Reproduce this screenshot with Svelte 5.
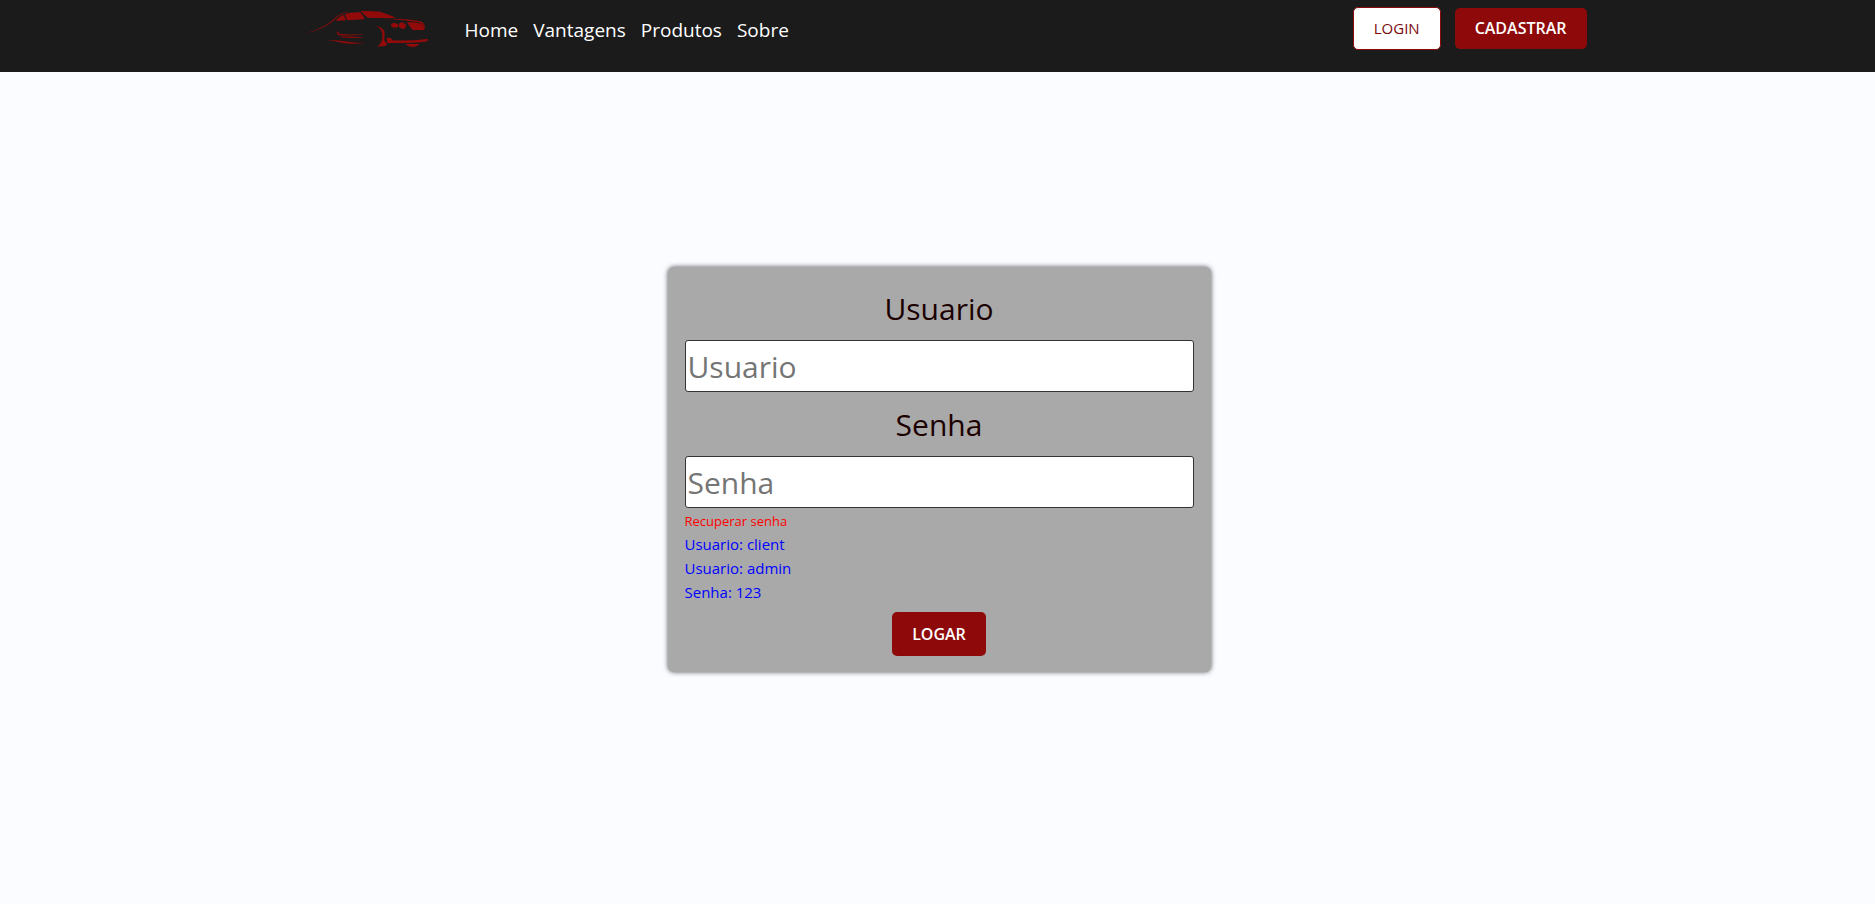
<script>
  const links = ['Home', 'Vantagens', 'Produtos', 'Sobre'];
  const hints = ['Usuario: client', 'Usuario: admin', 'Senha: 123'];
  let user = $state('');
  let password = $state('');
</script>

<header>
  <div class="bar">
    <a class="logo" href="#home" aria-label="Home">
      <svg viewBox="0 0 450 216" aria-hidden="true">
        <path d="M17 100 Q75 82 101 57 Q122 36 150 34 Q123 41 105 59 Q76 87 17 100Z" opacity="0.7" />
        <path d="M108 63 Q117 49 131 45 L138 61Z" />
        <path d="M134 43 Q155 35 181 37 Q190 48 194 58 L142 61Z" />
        <path d="M182 33 Q213 32 240 35 Q268 43 288 54 Q240 55 204 53 Q193 46 182 33Z" />
        <path d="M240 56 Q335 55 365 65 Q377 73 375 88 Q371 72 356 67 Q320 59 240 56Z" />
        <path d="M321 66 Q350 66 366 73 Q374 80 373 90 L338 90 Q329 80 321 66Z" />
        <ellipse cx="284" cy="76" rx="11" ry="7" transform="rotate(10 284 76)" />
        <ellipse cx="307" cy="77" rx="11" ry="9" transform="rotate(30 307 77)" />
        <path d="M228 79 Q259 82 253 112 Q252 128 262 131 L258 137 L231 140 Q248 130 247 108 Q248 86 228 79Z" />
        <path d="M260 113 L273 114 L276 121 Q335 124 383 116 L383 124 Q350 130 300 129 L262 129Z" />
        <path d="M317 132 L358 132 Q351 141 337 141 Q323 140 317 132Z" />
        <path d="M108 92 L119 101 Q155 105 200 103 Q155 109 114 105Z" />
        <path d="M112 110 Q150 109 195 113 Q150 116 112 110Z" />
        <path d="M78 119 Q115 120 145 125 Q170 129 196 129 Q160 133 130 129 Q105 123 78 119Z" />
      </svg>
    </a>
    <nav>
      {#each links as link}
        <a href="#{link.toLowerCase()}">{link}</a>
      {/each}
    </nav>
    <div class="actions">
      <button type="button" class="btn light">LOGIN</button>
      <button type="button" class="btn">CADASTRAR</button>
    </div>
  </div>
</header>

<main>
  <form onsubmit={(e) => e.preventDefault()}>
    <label for="user">Usuario</label>
    <input id="user" type="text" placeholder="Usuario" bind:value={user} />
    <label for="password">Senha</label>
    <input id="password" type="password" placeholder="Senha" bind:value={password} />
    <a class="recover" href="#recuperar">Recuperar senha</a>
    {#each hints as hint}
      <p>{hint}</p>
    {/each}
    <button type="submit" class="btn submit">LOGAR</button>
  </form>
</main>

<style>
  :global(body) {
    margin: 0;
    background: #fafcff;
    font-family: 'Segoe UI', 'Open Sans', 'Noto Sans', sans-serif;
  }

  header {
    background: #1b1b1b;
  }

  .bar {
    display: flex;
    align-items: flex-start;
    box-sizing: border-box;
    max-width: 1298px;
    height: 72px;
    margin: 0 auto;
    padding-left: 11px;
  }

  .logo {
    display: block;
    width: 150px;
    height: 72px;
    flex: none;
  }

  .logo svg {
    display: block;
    width: 100%;
    height: 100%;
    fill: #930a0a;
  }

  nav {
    display: flex;
    gap: 15px;
    padding: 15px 15px;
  }

  nav a {
    color: #fff;
    font-size: 19px;
    line-height: 30px;
    text-decoration: none;
  }

  .actions {
    display: flex;
    align-items: center;
    gap: 14px;
    margin-left: auto;
    padding-top: 7px;
  }

  .btn {
    padding: 0 20px;
    border: 0;
    border-radius: 5px;
    background: #8e0a0a;
    color: #fff;
    font-family: inherit;
    font-size: 16px;
    font-weight: 600;
    line-height: 41px;
    cursor: pointer;
  }

  .light {
    border: 1px solid #8e0a0a;
    background: #fff;
    color: #7c0a0e;
    font-size: 15px;
    font-weight: 500;
  }

  main {
    display: flex;
    justify-content: center;
    padding: 195px 0 48px 3px;
  }

  form {
    display: flex;
    flex-direction: column;
    box-sizing: border-box;
    width: 100%;
    max-width: 543px;
    padding: 18px 17px 16px;
    border-radius: 6px;
    background: #a9a9a9;
    box-shadow: 0 0 5px #555;
  }

  label {
    margin-bottom: 7px;
    color: #1c0000;
    font-size: 30px;
    line-height: 48px;
    text-align: center;
  }

  input {
    box-sizing: border-box;
    width: 100%;
    height: 52px;
    margin-bottom: 9px;
    padding: 1px 2px 0;
    border: 1px solid #333;
    border-radius: 3px;
    background: #fff;
    font-family: inherit;
    font-size: 30px;
  }

  input::placeholder {
    color: #757575;
    opacity: 1;
  }

  #password {
    margin-bottom: 2px;
  }

  .recover {
    align-self: flex-start;
    color: #f00;
    font-size: 13px;
    line-height: 22px;
    text-decoration: none;
  }

  p {
    margin: 0;
    color: #00f;
    font-size: 15px;
    line-height: 24px;
  }

  .submit {
    align-self: center;
    margin-top: 8px;
    line-height: 44px;
  }
</style>
